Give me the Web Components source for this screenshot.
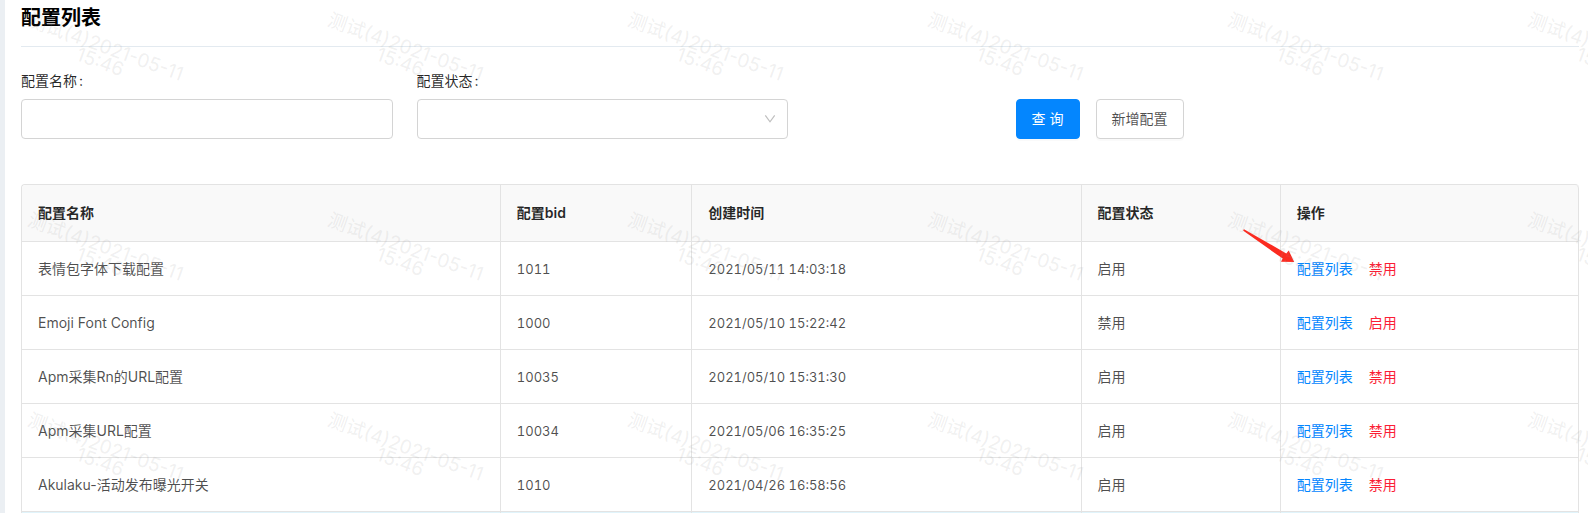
<!DOCTYPE html>
<html lang="zh-CN">
<head>
<meta charset="utf-8">
<title>配置列表</title>
<style>
html, body { margin: 0; height: 100%; }
body { overflow: hidden; background: #fff; color: rgba(0,0,0,.85); font: 14px/22px Inter, "Noto Sans CJK SC", sans-serif; }
</style>
</head>
<body>
<config-page></config-page>
<script>
const define = (name, html, setup) => {
  const tpl = document.createElement('template');
  tpl.innerHTML = html;
  customElements.define(name, class extends HTMLElement {
    constructor() {
      super();
      this.attachShadow({ mode: 'open' }).append(tpl.content.cloneNode(true));
    }
    connectedCallback() { if (setup) setup(this, this.shadowRoot); }
  });
};

define('text-field', `
<style>
:host { display: block; }
label { display: block; margin-bottom: 7px; }
label span { margin-left: 2px; }
input { display: block; box-sizing: border-box; width: 100%; height: 40px; padding: 4px 11px; border: 1px solid #d4d4d4; border-radius: 4px; background: #fff; font: inherit; color: inherit; }
</style>
<label for="f"><slot></slot><span>:</span></label><input id="f" type="text">`);

define('select-field', `
<style>
:host { display: block; }
label { display: block; margin-bottom: 7px; }
label span { margin-left: 2px; }
.box { display: grid; align-items: center; }
.box > * { grid-area: 1 / 1; }
select { appearance: none; box-sizing: border-box; width: 100%; height: 40px; padding: 4px 11px; border: 1px solid #d4d4d4; border-radius: 4px; background: #fff; font: inherit; color: inherit; }
svg { justify-self: end; margin-right: 12px; pointer-events: none; }
</style>
<label for="f"><slot></slot><span>:</span></label>
<div class="box"><select id="f"><option value=""></option></select>
<svg width="12" height="12" viewBox="0 0 12 12" fill="none" stroke="#bfbfbf" stroke-width="1.2"><path d="M1.3 2.4 6 8.8l4.7-6.4"/></svg></div>`);

define('action-button', `
<style>
:host { display: block; }
button { box-sizing: border-box; height: 40px; padding: 0 15px; border: 1px solid #d4d4d4; border-radius: 4px; background: #fff; color: rgba(0,0,0,.7); font: inherit; box-shadow: 0 2px 0 rgba(0,0,0,.02); }
:host([primary]) button { border-color: #0486fe; background: #0486fe; color: #fff; }
</style>
<button type="button"><slot></slot></button>`);

define('pointer-arrow', `
<style>
:host { display: block; pointer-events: none; }
svg { display: block; }
</style>
<svg width="52" height="34" viewBox="0 0 52 34"><path fill="#fb2b20" d="M1 .2 Q.2 .6.3 1.8L39.7 29.6 38 32.8 51.2 33 45.7 21.4 43.3 24.4Z"/></svg>`);

define('config-table', `
<style>
:host { display: block; }
table { width: 100%; table-layout: fixed; border-collapse: separate; border-spacing: 0; border: solid #e3e3e3; border-width: 1px 0 0 1px; border-radius: 4px 4px 0 0; color: rgba(0,0,0,.7); }
th, td { box-sizing: border-box; padding: 0 16px; border: solid #e3e3e3; border-width: 0 1px 1px 0; text-align: left; }
th { height: 57px; background: #f9f9f9; color: rgba(0,0,0,.85); font-weight: 600; }
th:first-child { border-top-left-radius: 4px; }
th:last-child { border-top-right-radius: 4px; }
td { height: 54px; }
td:nth-child(2), td:nth-child(3) { font-size: 13px; font-variant-numeric: tabular-nums; }
.hover td { background: #e1f4fb; }
.ops { display: flex; gap: 16px; position: relative; }
a { color: #0486fe; text-decoration: none; }
a.toggle { color: #fb1e35; }
pointer-arrow { position: absolute; right: 100%; bottom: 50%; margin: 0 2px 6px 0; }
</style>
<table>
<colgroup><col style="width:30.75%"><col style="width:12.3%"><col style="width:25%"><col style="width:12.8%"><col></colgroup>
<thead><tr><th>配置名称</th><th>配置bid</th><th>创建时间</th><th>配置状态</th><th>操作</th></tr></thead>
<tbody></tbody>
</table>`,
  (el, root) => {
    const rows = [
      ['表情包字体下载配置', '1011', '2021/05/11 14:03:18', '启用', '禁用'],
      ['Emoji Font Config', '1000', '2021/05/10 15:22:42', '禁用', '启用'],
      ['Apm采集Rn的URL配置', '10035', '2021/05/10 15:31:30', '启用', '禁用'],
      ['Apm采集URL配置', '10034', '2021/05/06 16:35:25', '启用', '禁用'],
      ['Akulaku-活动发布曝光开关', '1010', '2021/04/26 16:58:56', '启用', '禁用']
    ];
    root.querySelector('tbody').innerHTML = rows.map((r, i) =>
      `<tr>${r.slice(0, 4).map(c => `<td>${c}</td>`).join('')}<td><div class="ops"><a href="#list">配置列表</a><a class="toggle" href="#toggle">${r[4]}</a>${i ? '' : '<pointer-arrow></pointer-arrow>'}</div></td></tr>`
    ).join('') + '<tr class="hover"><td></td><td></td><td></td><td></td><td></td></tr>';
  });

define('water-mark', `
<style>
:host { position: absolute; inset: 0; overflow: hidden; pointer-events: none; display: grid; grid-template-columns: repeat(6, 300px); grid-auto-rows: 200px; color: rgba(150,150,150,.15); font-size: 19px; line-height: 16px; }
.tile { display: grid; grid-template: 110px / 206px; place-items: center; }
.mark { text-align: center; white-space: nowrap; transform: rotate(20deg); }
</style>`,
  (el, root) => {
    for (let i = 0; i < 18; i++) {
      const tile = document.createElement('div');
      tile.className = 'tile';
      tile.innerHTML = '<div class="mark">测试(4)2021-05-11<br>15:46</div>';
      root.append(tile);
    }
  });

define('config-page', `
<style>
:host { display: block; position: relative; box-sizing: border-box; height: 100%; overflow: hidden; padding: 0 9px 0 16px; border-left: 5px solid #ebeff3; }
h1 { margin: 0 0 23px; padding: 4px 0 14px; border-bottom: 1px solid #e3eaf0; font-size: 20px; line-height: 28px; font-weight: 700; color: #000; }
form { display: grid; grid-template-columns: repeat(4, 1fr); gap: 24px; align-items: end; margin-bottom: 45px; }
.actions { display: flex; justify-content: flex-end; gap: 16px; }
water-mark { left: -5px; }
</style>
<h1>配置列表</h1>
<form>
<text-field>配置名称</text-field>
<select-field>配置状态</select-field>
<div class="actions"><action-button primary>查 询</action-button><action-button>新增配置</action-button></div>
</form>
<config-table></config-table>
<water-mark></water-mark>`);
</script>
</body>
</html>
